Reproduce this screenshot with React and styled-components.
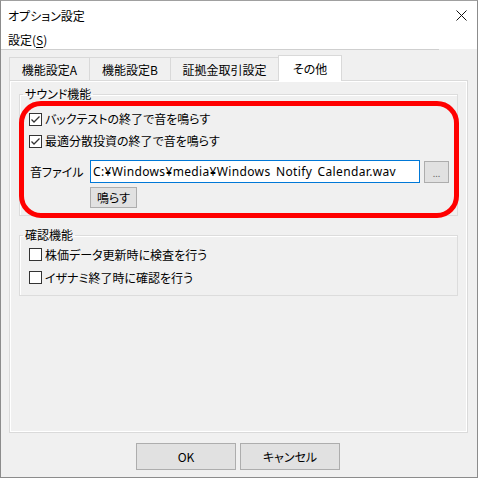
import React from 'react'
import styled, { createGlobalStyle } from 'styled-components'

const GlobalStyle = createGlobalStyle`
	html, body {
		margin: 0;
		padding: 0;
		background: #ffffff;
	}
	* {
		box-sizing: border-box;
	}
`

const jp = `"Noto Sans CJK JP", "Noto Sans", sans-serif`

const Window = styled.div`
	width: 478px;
	height: 478px;
	display: flex;
	flex-direction: column;
	border: 1px solid #8c8c8c;
	border-top-color: #a0a0a0;
	background: #f0f0f0;
	font-family: ${jp};
	font-size: 12px;
	font-feature-settings: 'palt';
	color: #000;
	overflow: hidden;
`

const TitleBar = styled.div`
	height: 29px;
	display: flex;
	align-items: center;
	justify-content: space-between;
	padding: 0 10px 0 7px;
	background: #ffffff;
`

const MenuBar = styled.div`
	height: 19px;
	display: flex;
	align-items: center;
	padding-left: 7px;
	background: #ffffff;
`

const MenuItem = styled.span`
	u {
		text-decoration: underline;
		text-underline-offset: 2px;
	}
`

const Separator = styled.div`
	height: 1px;
	width: 438px;
	background: #cfcfcf;
`

const Body = styled.div`
	flex: 1;
	display: flex;
	flex-direction: column;
	padding: 5px 0 0 8px;
`

const TabRow = styled.div`
	display: flex;
	align-items: flex-start;
	height: 26px;
	margin-bottom: -1px;
`

const Tab = styled.div`
	position: relative;
	width: ${props => props.w}px;
	height: ${props => (props.active ? 26 : 23)}px;
	margin-top: ${props => (props.active ? 0 : 2)}px;
	margin-left: ${props => (props.first ? 0 : -1)}px;
	display: flex;
	align-items: center;
	justify-content: center;
	padding-top: ${props => (props.active ? 0 : 1)}px;
	border: 1px solid #d9d9d9;
	border-bottom: none;
	background: ${props => (props.active ? '#ffffff' : '#f0f0f0')};
	z-index: ${props => (props.active ? 2 : 0)};
`

const Panel = styled.div`
	position: relative;
	width: 459px;
	height: 353px;
	padding: 5px 0 0 9px;
	border: 1px solid #dadada;
	box-shadow: inset 1px 1px 0 #ffffff, inset -1px -1px 0 #ffffff;
	background: #f0f0f0;
`

const Group = styled.fieldset`
	width: 439px;
	margin: ${props => props.gap || 0}px 0 0 0;
	padding: ${props => props.pt}px 0 ${props => props.pb}px 9px;
	border: 1px solid #dcdcdc;
	box-shadow: 1px 1px 0 #ffffff inset;
	min-inline-size: 0;
`

const Legend = styled.legend`
	margin-left: -6px;
	padding: 0 2px;
	line-height: 16px;
	color: #000;
`

const CheckRow = styled.label`
	height: ${props => props.h}px;
	display: flex;
	align-items: center;
	gap: 3px;
	line-height: 16px;
`

const Box = styled.svg`
	width: 13px;
	height: 13px;
	flex: none;
`

const FileRow = styled.div`
	display: flex;
	align-items: center;
	margin-top: 8px;
	padding-left: 1px;
`

const FileLabel = styled.span`
	width: 60px;
`

const PathInput = styled.div`
	width: 330px;
	height: 23px;
	display: flex;
	align-items: center;
	padding-left: 2px;
	border: 1px solid #0078d7;
	background: #ffffff;
	font-family: "Noto Sans", "Liberation Sans", sans-serif;
	font-size: 12px;
	letter-spacing: 0.35px;
	word-spacing: 2px;
	font-feature-settings: normal;
	white-space: nowrap;
	overflow: hidden;
`

const Button = styled.div`
	width: ${props => props.w}px;
	height: ${props => props.h}px;
	display: flex;
	align-items: center;
	justify-content: center;
	border: 1px solid #adadad;
	background: #e1e1e1;
	color: ${props => props.dim ? '#6d6d6d' : '#000'};
	font-size: ${props => props.small ? 9 : 12}px;
	padding-top: ${props => props.small ? 3 : 0}px;
	flex: none;
`

const PlayRow = styled.div`
	margin: 4px 0 0 61px;
`

const Ring = styled.div`
	position: absolute;
	left: 9px;
	top: 20px;
	width: 440px;
	height: 117px;
	border: 5px solid #ff0000;
	border-radius: 22px;
	pointer-events: none;
`

const Footer = styled.div`
	display: flex;
	justify-content: center;
	gap: 4px;
	margin-top: 10px;
	padding-right: 10px;
`

const CheckBox = ({ checked }) => (
	<Box viewBox="0 0 13 13">
		<rect x="0.5" y="0.5" width="12" height="12" fill="#fff" stroke="#333" />
		{checked && (
			<path d="M2.5 6.5 L5 9 L10.5 3.5" fill="none" stroke="#333" strokeWidth="1.3" />
		)}
	</Box>
)

const CloseIcon = () => (
	<svg width="11" height="11" viewBox="0 0 11 11">
		<path d="M0.5 0.5 L10.5 10.5 M10.5 0.5 L0.5 10.5" stroke="#111" strokeWidth="1" />
	</svg>
)

const tabs = [
	{ name: '機能設定A', w: 81 },
	{ name: '機能設定B', w: 82 },
	{ name: '証拠金取引設定', w: 109 },
	{ name: 'その他', w: 64, active: true }
]

export default function App() {
	return (
		<>
			<GlobalStyle />
			<Window>
				<TitleBar>
					<span>オプション設定</span>
					<CloseIcon />
				</TitleBar>
				<MenuBar>
					<MenuItem>
						設定(<u>S</u>)
					</MenuItem>
				</MenuBar>
				<Separator />
				<Body>
					<TabRow>
						{tabs.map((t, i) => (
							<Tab key={t.name} w={t.w} active={t.active} first={i === 0}>
								{t.name}
							</Tab>
						))}
					</TabRow>
					<Panel>
						<Group pt={6} pb={7}>
							<Legend>サウンド機能</Legend>
							<CheckRow h={22}>
								<CheckBox checked />
								バックテストの終了で音を鳴らす
							</CheckRow>
							<CheckRow h={22}>
								<CheckBox checked />
								最適分散投資の終了で音を鳴らす
							</CheckRow>
							<FileRow>
								<FileLabel>音ファイル</FileLabel>
								<PathInput>C:¥Windows¥media¥Windows Notify Calendar.wav</PathInput>
								<Button w={25} h={22} small dim style={{ marginLeft: 4 }}>
									...
								</Button>
							</FileRow>
							<PlayRow>
								<Button w={47} h={21}>
									鳴らす
								</Button>
							</PlayRow>
						</Group>
						<Group gap={11} pt={0} pb={6}>
							<Legend>確認機能</Legend>
							<CheckRow h={23}>
								<CheckBox />
								株価データ更新時に検査を行う
							</CheckRow>
							<CheckRow h={23}>
								<CheckBox />
								イザナミ終了時に確認を行う
							</CheckRow>
						</Group>
						<Ring />
					</Panel>
					<Footer>
						<Button w={100} h={27}>
							OK
						</Button>
						<Button w={100} h={27}>
							キャンセル
						</Button>
					</Footer>
				</Body>
			</Window>
		</>
	)
}
